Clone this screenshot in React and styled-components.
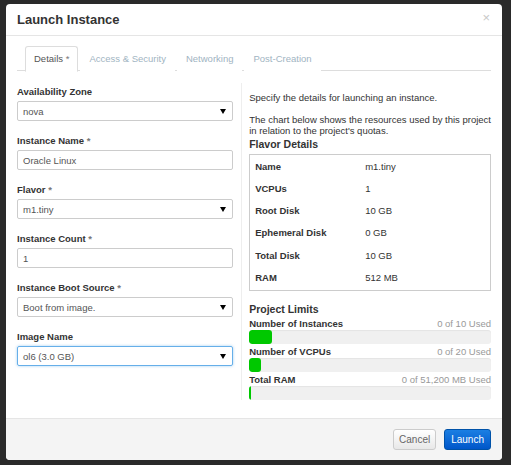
import React from 'react';
import styled, { createGlobalStyle } from 'styled-components';

const GlobalStyle = createGlobalStyle`
    html, body {
        margin: 0;
        padding: 0;
        background: #2a2a2a;
    }
    body {
        font-family: "Liberation Sans", Arial, sans-serif;
        font-size: 9.5px;
        color: #333;
    }
`

const flavor = [
    ['Name', 'm1.tiny'],
    ['VCPUs', '1'],
    ['Root Disk', '10 GB'],
    ['Ephemeral Disk', '0 GB'],
    ['Total Disk', '10 GB'],
    ['RAM', '512 MB'],
];

const limits = [
    { label: 'Number of Instances', used: '0 of 10 Used', fill: 23 },
    { label: 'Number of VCPUs', used: '0 of 20 Used', fill: 12 },
    { label: 'Total RAM', used: '0 of 51,200 MB Used', fill: 2 },
];

function Field({ label, required, children }) {
    return (
        <Group>
            <Label>
                {label}
                {required && <Star> *</Star>}
            </Label>
            {children}
        </Group>
    )
}

function Select({ value, focused }) {
    return (
        <Control focused={focused}>
            <span>{value}</span>
            <Arrow />
        </Control>
    )
}

function App() {
    return (
        <Page>
            <GlobalStyle />
            <Modal>
                <Header>
                    <Title>Launch Instance</Title>
                    <Close>×</Close>
                </Header>
                <Body>
                    <Tabs>
                        <Tab active>Details <Star>*</Star></Tab>
                        <Tab>Access &amp; Security</Tab>
                        <Tab>Networking</Tab>
                        <Tab>Post-Creation</Tab>
                    </Tabs>
                    <Columns>
                        <LeftCol>
                            <Field label="Availability Zone">
                                <Select value="nova" />
                            </Field>
                            <Field label="Instance Name" required>
                                <Control>Oracle Linux</Control>
                            </Field>
                            <Field label="Flavor" required>
                                <Select value="m1.tiny" />
                            </Field>
                            <Field label="Instance Count" required>
                                <Control>1</Control>
                            </Field>
                            <Field label="Instance Boot Source" required>
                                <Select value="Boot from image." />
                            </Field>
                            <Field label="Image Name">
                                <Select value="ol6 (3.0 GB)" focused />
                            </Field>
                        </LeftCol>
                        <RightCol>
                            <Text>Specify the details for launching an instance.</Text>
                            <Text last>
                                The chart below shows the resources used by this project<br />
                                in relation to the project's quotas.
                            </Text>
                            <SubTitle>Flavor Details</SubTitle>
                            <FlavorBox>
                                {flavor.map(([k, v]) => (
                                    <FlavorRow key={k}>
                                        <FlavorKey>{k}</FlavorKey>
                                        <span>{v}</span>
                                    </FlavorRow>
                                ))}
                            </FlavorBox>
                            <SubTitle>Project Limits</SubTitle>
                            {limits.map(l => (
                                <div key={l.label}>
                                    <LimitHead>
                                        <LimitLabel>{l.label}</LimitLabel>
                                        <Used>{l.used}</Used>
                                    </LimitHead>
                                    <Bar>
                                        <Fill style={{ width: l.fill }} />
                                    </Bar>
                                </div>
                            ))}
                        </RightCol>
                    </Columns>
                </Body>
                <Footer>
                    <Button>Cancel</Button>
                    <Button primary>Launch</Button>
                </Footer>
            </Modal>
        </Page>
    )
}

const Page = styled.div`
    width: 511px;
    height: 465px;
    padding: 4px 0 0 6px;
    box-sizing: border-box;
`

const Modal = styled.div`
    width: 496px;
    height: 456px;
    background: #fff;
    border-radius: 4px;
    display: flex;
    flex-direction: column;
    overflow: hidden;
`

const Header = styled.div`
    height: 32px;
    border-bottom: 1px solid #e5e5e5;
    display: flex;
    align-items: center;
    justify-content: space-between;
    padding: 0 12px 0 11px;
    box-sizing: border-box;
`

const Title = styled.div`
    font-size: 13px;
    font-weight: bold;
    color: #333;
`

const Close = styled.div`
    font-size: 13px;
    color: #c8c8c8;
    margin-top: -4px;
`

const Body = styled.div`
    flex: 1;
    padding: 10px 11px 0 11px;
`

const Tabs = styled.div`
    display: flex;
    border-bottom: 1px solid #ddd;
    padding-left: 8px;
    height: 24px;
`

const Tab = styled.div`
    padding: 0 8px;
    margin-right: 2px;
    height: 24px;
    line-height: 24px;
    color: ${p => p.active ? '#555' : '#9fb4c2'};
    border: 1px solid ${p => p.active ? '#ddd' : 'transparent'};
    border-bottom-color: ${p => p.active ? '#fff' : 'transparent'};
    border-radius: 3px 3px 0 0;
    background: #fff;
`

const Star = styled.span`
    color: #777;
`

const Columns = styled.div`
    display: flex;
    margin-top: 12px;
`

const LeftCol = styled.div`
    width: 218px;
    padding-top: 2px;
    padding-right: 8px;
    border-right: 1px solid #eee;
`

const Group = styled.div`
    margin-bottom: 13px;
`

const Label = styled.div`
    font-weight: bold;
    color: #333;
    height: 13px;
    line-height: 13px;
    margin-bottom: 3px;
`

const Control = styled.div`
    height: 20px;
    box-sizing: border-box;
    border: 1px solid ${p => p.focused ? '#66afe9' : '#ccc'};
    box-shadow: ${p => p.focused ? '0 0 3px rgba(102,175,233,0.6)' : 'none'};
    border-radius: 2px;
    display: flex;
    align-items: center;
    justify-content: space-between;
    padding: 0 6px 0 5px;
    color: #555;
`

const Arrow = styled.span`
    width: 0;
    height: 0;
    border-left: 3px solid transparent;
    border-right: 3px solid transparent;
    border-top: 5px solid #000;
`

const RightCol = styled.div`
    flex: 1;
    padding: 9px 0 0 7px;
`

const Text = styled.p`
    margin: 0 0 ${p => p.last ? '0' : '10px'} 0;
    line-height: 11.5px;
    white-space: nowrap;
    color: #333;
`

const SubTitle = styled.div`
    font-size: 10.5px;
    font-weight: bold;
    line-height: 13px;
    margin-top: 1px;
`

const FlavorBox = styled.div`
    border: 1px solid #ccc;
    margin: 3px 0 12px 0;
    padding: 1px 0;
`

const FlavorRow = styled.div`
    display: flex;
    height: 22.3px;
    line-height: 22.3px;
    padding-left: 5px;
`

const FlavorKey = styled.span`
    width: 110px;
    font-weight: bold;
`

const LimitHead = styled.div`
    display: flex;
    justify-content: space-between;
    line-height: 12px;
    margin-top: 2px;
`

const LimitLabel = styled.span`
    font-weight: bold;
`

const Used = styled.span`
    color: #999;
`

const Bar = styled.div`
    height: 14px;
    background: #f0f0f0;
    border-radius: 3px;
    overflow: hidden;
    box-shadow: inset 0 1px 1px rgba(0,0,0,0.05);
`

const Fill = styled.div`
    height: 100%;
    background: #00c800;
    border-radius: 3px;
`

const Footer = styled.div`
    height: 42px;
    border-top: 1px solid #e5e5e5;
    background: #f4f4f4;
    display: flex;
    justify-content: flex-end;
    align-items: center;
    gap: 8px;
    padding: 0 11px 0 0;
    box-sizing: border-box;
`

const Button = styled.button`
    font-family: "Liberation Sans", Arial, sans-serif;
    font-size: 10px;
    height: 21px;
    padding: 0 ${p => p.primary ? '6px' : '5px'};
    border-radius: 3px;
    cursor: pointer;
    color: ${p => p.primary ? '#fff' : '#666'};
    border: 1px solid ${p => p.primary ? '#0052a8' : '#ccc'};
    background: ${p => p.primary
        ? 'linear-gradient(#1b7fe3, #0056c9)'
        : 'linear-gradient(#fff, #e8e8e8)'};
`

export default App;
